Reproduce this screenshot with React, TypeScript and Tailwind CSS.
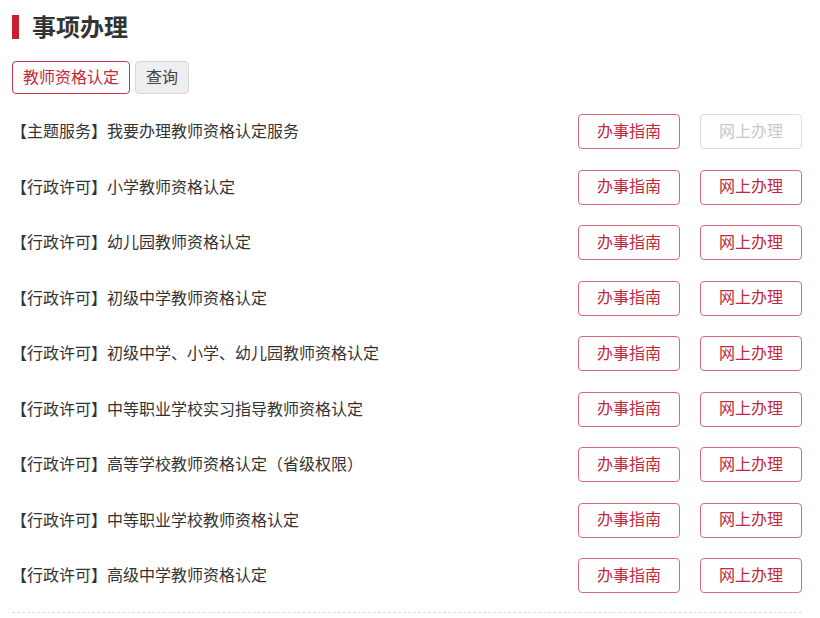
const items = [
  { tag: "主题服务", name: "我要办理教师资格认定服务", online: false },
  { tag: "行政许可", name: "小学教师资格认定", online: true },
  { tag: "行政许可", name: "幼儿园教师资格认定", online: true },
  { tag: "行政许可", name: "初级中学教师资格认定", online: true },
  { tag: "行政许可", name: "初级中学、小学、幼儿园教师资格认定", online: true },
  { tag: "行政许可", name: "中等职业学校实习指导教师资格认定", online: true },
  { tag: "行政许可", name: "高等学校教师资格认定（省级权限）", online: true },
  { tag: "行政许可", name: "中等职业学校教师资格认定", online: true },
  { tag: "行政许可", name: "高级中学教师资格认定", online: true },
];

export default function App() {
  return (
    <div className="bg-white w-[820px] h-[618px] overflow-hidden font-['Liberation_Sans','Noto_Sans_CJK_SC',sans-serif]">
      <div className="ml-[12px] w-[790px] pt-[15px]">
        {/* title */}
        <div className="flex items-center h-[24px]">
          <span className="w-[7px] h-[24px] bg-[#c81e32]" />
          <h2 className="ml-[13px] mt-[2px] text-[24px] font-bold text-[#333] leading-none">事项办理</h2>
        </div>

        {/* tabs */}
        <div className="flex gap-[5px] mt-[22px]">
          <button className="h-[33px] px-[10px] border border-[#c8354a] rounded-[4px] text-[16px] text-[#c0283c] bg-white">
            教师资格认定
          </button>
          <button className="h-[33px] px-[10px] border border-[#d8d8d8] rounded-[4px] text-[16px] text-[#444] bg-[#eeeeee]">
            查询
          </button>
        </div>

        {/* list */}
        <div className="mt-[10px]">
          {items.map((it, i) => (
            <div key={i} className="flex items-center h-[55.5px]">
              <p className="flex-1 text-[16px] text-[#333] -ml-[1px] mt-[1px]">
                【{it.tag}】{it.name}
              </p>
              <button className="w-[102px] h-[35px] border border-[#d66a7a] rounded-[4px] text-[16px] text-[#c0283c] bg-white">
                办事指南
              </button>
              <button
                className={
                  it.online
                    ? "ml-[20px] w-[102px] h-[35px] border border-[#d66a7a] rounded-[4px] text-[16px] text-[#c0283c] bg-white"
                    : "ml-[20px] w-[102px] h-[35px] border border-[#dcdcdc] rounded-[4px] text-[16px] text-[#c8c8c8] bg-white"
                }
              >
                网上办理
              </button>
            </div>
          ))}
        </div>

        <div className="mt-[8px] border-t border-dashed border-[#dddddd]" />
      </div>
    </div>
  );
}
